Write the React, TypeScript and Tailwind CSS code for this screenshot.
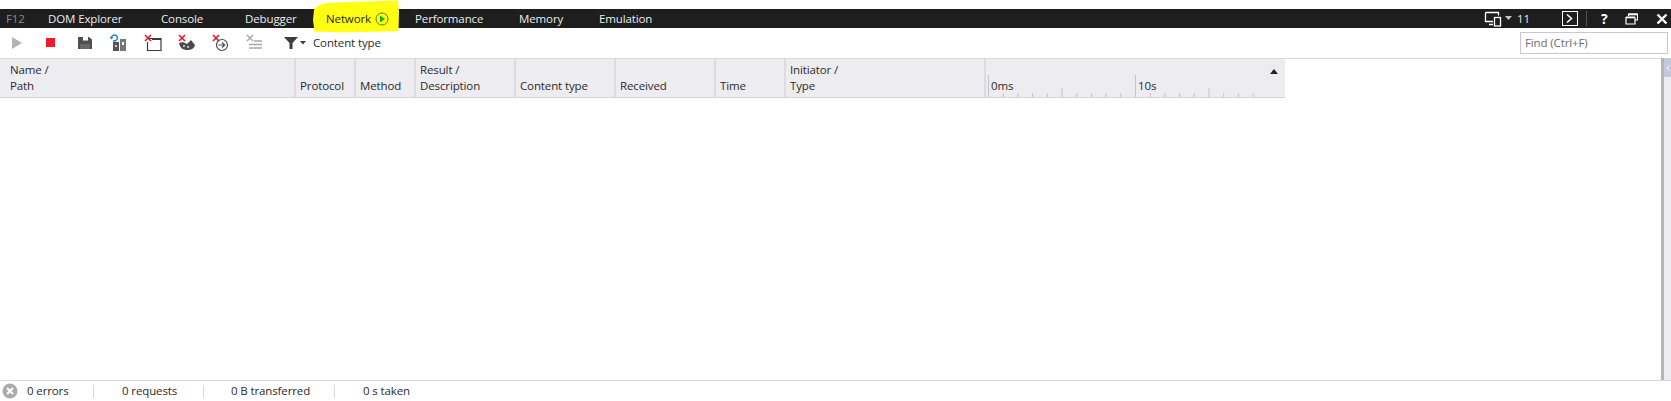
const tabs = [
  { label: 'DOM Explorer', width: 'w-[113px]' },
  { label: 'Console', width: 'w-[84px]' },
  { label: 'Debugger', width: 'w-[81px]' },
];
const tabsAfter = [
  { label: 'Performance', width: 'w-[104px]' },
  { label: 'Memory', width: 'w-[80px]' },
  { label: 'Emulation', width: 'w-[80px]' },
];

const columns = [
  { top: 'Name /', bottom: 'Path', width: 'w-[296px]', pad: 'pl-[10px]' },
  { top: '', bottom: 'Protocol', width: 'w-[60px]', pad: 'pl-[4px]' },
  { top: '', bottom: 'Method', width: 'w-[60px]', pad: 'pl-[4px]' },
  { top: 'Result /', bottom: 'Description', width: 'w-[100px]', pad: 'pl-[4px]' },
  { top: '', bottom: 'Content type', width: 'w-[100px]', pad: 'pl-[4px]' },
  { top: '', bottom: 'Received', width: 'w-[100px]', pad: 'pl-[4px]' },
  { top: '', bottom: 'Time', width: 'w-[70px]', pad: 'pl-[4px]' },
  { top: 'Initiator /', bottom: 'Type', width: 'w-[200px]', pad: 'pl-[4px]' },
];

const RedX = () => (
  <path d="M1 1l6 6M7 1l-6 6" stroke="#e81123" strokeWidth="1.5" fill="none" />
);

const toolbarIcons = [
  // start
  <svg key="play" width="18" height="18" viewBox="0 0 18 18"><path d="M4 3l10 6-10 6z" fill="#b4b4b4" /></svg>,
  // stop
  <svg key="stop" width="18" height="18" viewBox="0 0 18 18"><rect x="4" y="4" width="9" height="9" fill="#ed1c2c" /></svg>,
  // save
  <svg key="save" width="18" height="18" viewBox="0 0 18 18"><path d="M2 3h11l3 2.500V15H2z" fill="#4f4f4f" /><rect x="7" y="3" width="5" height="3.500" fill="#fff" /><rect x="4" y="10" width="10" height="5" fill="#666" /></svg>,
  // always refresh
  <svg key="refresh" width="20" height="20" viewBox="0 0 20 20"><path d="M2.500 4.500a3 3 0 1 1 1.500 3" stroke="#2e84c9" strokeWidth="1.500" fill="none" /><path d="M.5 4h4l-2 2.500z" fill="#2e84c9" /><rect x="4" y="9" width="6" height="9" fill="#555" /><rect x="11" y="6" width="6" height="12" fill="#777" /><rect x="13" y="9" width="2" height="3" fill="#fff" /><rect x="6" y="12" width="2" height="2" fill="#ccc" /></svg>,
  // clear session
  <svg key="clear" width="18" height="18" viewBox="0 0 18 18"><RedX /><path d="M5 4.500h12v12H3.500V8" stroke="#3c3c3c" strokeWidth="1.200" fill="none" /><rect x="8" y="4" width="9" height="2" fill="#3c3c3c" /></svg>,
  // clear cookies
  <svg key="cookie" width="18" height="18" viewBox="0 0 18 18"><RedX /><path d="M1 9l4-1 4 2 4-4 4 5c-1 4-4 5-8 5s-7-2-8-7z" fill="#4a4a4a" /><circle cx="6" cy="12" r="1" fill="#ddd" /><circle cx="10" cy="13" r="1" fill="#ddd" /></svg>,
  // clear on navigate
  <svg key="nav" width="18" height="18" viewBox="0 0 18 18"><RedX /><circle cx="10" cy="11" r="5.500" stroke="#4a4a4a" strokeWidth="1.200" fill="none" /><path d="M6.500 11h6M10 8.500l2.700 2.500-2.700 2.500" stroke="#4a4a4a" strokeWidth="1.200" fill="none" /></svg>,
  // clear list
  <svg key="list" width="18" height="18" viewBox="0 0 18 18"><path d="M1 1l6 6M7 1l-6 6" stroke="#a9a9a9" strokeWidth="1.500" fill="none" /><path d="M8 7h8M3 10.500h13M3 14h13" stroke="#a9a9a9" strokeWidth="1.500" fill="none" /></svg>,
];

const ticks = Array.from({ length: 19 }, (_, i) => i);

export default function App() {
  return (
    <div className="relative flex h-[401px] w-[1671px] flex-col overflow-hidden bg-white font-['Open_Sans','Liberation_Sans',sans-serif] text-[11.5px] tracking-[-0.12px] text-[#2b2b2b]">
      {/* top gap + nav bar */}
      <div className="mt-[9px] flex h-[19px] items-center bg-[#1e1e1e] text-[#ececec]">
        <span className="w-[48px] pl-[6px] text-[#8c8c8c]">F12</span>
        {tabs.map((tab) => (
          <span key={tab.label} className={tab.width}>{tab.label}</span>
        ))}
        <div className="relative flex w-[89px] items-center text-[#1e1e1e]">
          {/* hand drawn marker highlight */}
          <svg className="absolute left-[-13px] top-[-10px]" width="87" height="34" viewBox="0 0 87 34">
            <path d="M1 10C3 6 8 4 14 3 30 2 60 1.500 82 .5l3-.5 1 12-.5 19c-14 .5-30 1-42 1-14 .5-26 0-42-.5L0 20z" fill="#ffff14" />
          </svg>
          <span className="relative">Network</span>
          <svg className="relative ml-[4px]" width="14" height="14" viewBox="0 0 14 14">
            <circle cx="7" cy="7" r="6" stroke="#6a7a00" strokeWidth="1" fill="none" />
            <path d="M5 3.500l5 3.500-5 3.500z" fill="#12b012" />
          </svg>
        </div>
        {tabsAfter.map((tab) => (
          <span key={tab.label} className={tab.width}>{tab.label}</span>
        ))}
        <div className="ml-auto flex items-center">
          <svg width="18" height="16" viewBox="0 0 18 16">
            <path d="M1.500 1.500h13v3M9 10.500H1.500v-9M5 13.500h4" stroke="#fff" strokeWidth="1.300" fill="none" />
            <rect x="10.500" y="6.500" width="6" height="8.500" stroke="#fff" strokeWidth="1.300" fill="#1e1e1e" />
          </svg>
          <svg className="ml-[3px]" width="7" height="5" viewBox="0 0 7 5"><path d="M0 0h7L3.500 4z" fill="#c8c8c8" /></svg>
          <span className="ml-[5px] w-[45px]">11</span>
          <svg width="16" height="15" viewBox="0 0 16 15">
            <rect x=".5" y=".5" width="15" height="14" stroke="#fff" fill="none" />
            <path d="M5 3.500L9.500 7.500 5 11.500" stroke="#fff" strokeWidth="1.600" fill="none" />
          </svg>
          <span className="ml-[8px] h-[15px] w-px bg-[#555]" />
          <span className="ml-[14px] w-[12px] text-[14px] leading-none font-bold text-white">?</span>
          <svg className="ml-[12px]" width="13" height="12" viewBox="0 0 13 12">
            <path d="M3.500 3V1h9v6H10M1 4.500h9V11H1z" stroke="#fff" strokeWidth="1.200" fill="none" />
            <rect x="1" y="3.500" width="9" height="1.800" fill="#fff" />
            <rect x="3.500" y=".5" width="9" height="1.800" fill="#fff" />
          </svg>
          <svg className="ml-[18px] mr-[3px]" width="12" height="12" viewBox="0 0 12 12">
            <path d="M1.500 1.500l9 9M10.500 1.500l-9 9" stroke="#fff" strokeWidth="2.400" fill="none" />
          </svg>
        </div>
      </div>

      {/* toolbar */}
      <div className="flex h-[30px] items-center">
        {toolbarIcons.map((icon, i) => (
          <span key={i} className="flex w-[34px] justify-center">{icon}</span>
        ))}
        <svg className="ml-[12px]" width="14" height="14" viewBox="0 0 14 14"><path d="M0 1h14L8.500 7v6h-3V7z" fill="#3c3c3c" /></svg>
        <svg className="ml-[2px]" width="6" height="4" viewBox="0 0 6 4"><path d="M0 0h6L3 3.500z" fill="#3c3c3c" /></svg>
        <span className="ml-[7px]">Content type</span>
        <div className="ml-auto mr-[3px] flex h-[22px] w-[148px] items-center border border-[#c7c7dc] pl-[4px] text-[#6d6d6d]">Find (Ctrl+F)</div>
      </div>

      {/* main */}
      <div className="flex min-h-0 flex-1">
        <div className="min-w-0 flex-1 border-t border-[#d8d8dc]">
          <div className="flex h-[39px] w-[1285px] border-b border-[#d4d4d8] bg-[#edecf0] leading-[16px]">
            {columns.map((col) => (
              <div key={col.bottom} className={`${col.width} ${col.pad} flex flex-col justify-end border-r-2 border-[#dcdce0] pb-[3px]`}>
                <span className="h-[16px]">{col.top}</span>
                <span>{col.bottom}</span>
              </div>
            ))}
            <div className="relative flex-1">
              <svg className="absolute bottom-0 left-[1px]" width="296" height="22" viewBox="0 0 296 22">
                {ticks.map((i) => {
                  const x = 1.5 + i * 14.7;
                  const h = i % 10 === 0 ? 22 : i % 5 === 0 ? 9 : 4;
                  return <path key={i} d={`M${x} 22v-${h}`} stroke="#c4c4cc" fill="none" />;
                })}
              </svg>
              <span className="absolute bottom-[3px] left-[5px]">0ms</span>
              <span className="absolute bottom-[3px] left-[152px]">10s</span>
              <svg className="absolute right-[7px] top-[10px]" width="8" height="5" viewBox="0 0 8 5"><path d="M4 0l4 5H0z" fill="#222" /></svg>
            </div>
          </div>
        </div>
        {/* collapsed side panel */}
        <div className="flex w-[10px] border-l-[3px] border-[#b5b5b5] bg-[#edecf0]">
          <div className="flex h-[19px] w-full items-center justify-center bg-[#c5c8d8]">
            <svg width="4" height="6" viewBox="0 0 4 6"><path d="M3.500.5L1 3l2.500 2.500" stroke="#fff" fill="none" /></svg>
          </div>
        </div>
      </div>

      {/* status bar */}
      <div className="flex h-[21px] items-center border-t border-[#d8d8dc]">
        <svg className="ml-[2px]" width="16" height="16" viewBox="0 0 16 16">
          <circle cx="8" cy="8" r="7.500" fill="#ababab" />
          <path d="M5 5l6 6M11 5l-6 6" stroke="#fff" strokeWidth="2" fill="none" />
        </svg>
        <span className="ml-[9px] w-[66px]">0 errors</span>
        <span className="h-[13px] w-px bg-[#d8d8dc]" />
        <span className="ml-[28px] w-[81px]">0 requests</span>
        <span className="h-[13px] w-px bg-[#d8d8dc]" />
        <span className="ml-[27px] w-[103px]">0 B transferred</span>
        <span className="h-[13px] w-px bg-[#d8d8dc]" />
        <span className="ml-[28px]">0 s taken</span>
      </div>
    </div>
  );
}
